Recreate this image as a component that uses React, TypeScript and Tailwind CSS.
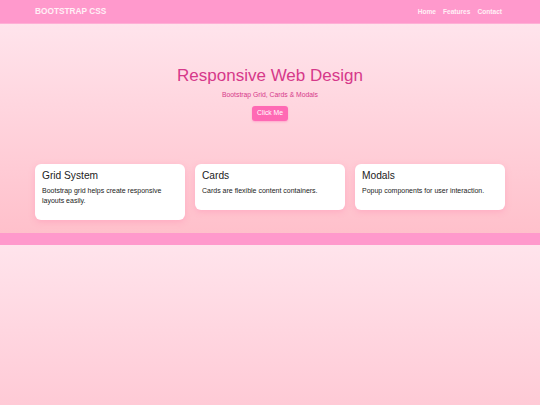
import React from 'react'

const cards = [
    { title: 'Grid System', text: 'Bootstrap grid helps create responsive layouts easily.' },
    { title: 'Cards', text: 'Cards are flexible content containers.' },
    { title: 'Modals', text: 'Popup components for user interaction.' },
]

const App = () => {
    return (
        <div className="min-h-[405px] flex flex-col" style={{ fontFamily: '"Liberation Sans", Arial, sans-serif' }}>
            {/* Navbar */}
            <nav className="h-[24px] bg-[#ff99cc] border-b border-[#ffb0d6]">
                <div className="mx-auto w-[470px] h-full flex items-center justify-between">
                    <span className="text-[8.3px] font-bold text-[#fff0f6]">BOOTSTRAP CSS</span>
                    <div className="flex gap-[7px] text-[6.6px] font-bold text-[#fff0f6] pr-[3px]">
                        <a href="#">Home</a>
                        <a href="#">Features</a>
                        <a href="#">Contact</a>
                    </div>
                </div>
            </nav>

            {/* Hero + cards */}
            <section className="h-[209px] bg-gradient-to-b from-[#ffe4ec] to-[#ffc0cb]">
                <div className="pt-[41px] flex flex-col items-center">
                    <h1 className="text-[17px] leading-[22px] text-[#d6398a]">Responsive Web Design</h1>
                    <p className="mt-[3px] text-[6.8px] leading-[9px] text-[#d6398a]">Bootstrap Grid, Cards &amp; Modals</p>
                    <button className="mt-[7px] h-[15px] w-[36px] rounded-[3px] bg-[#ff69b4] text-white text-[6.8px] shadow-[0_1px_2px_rgba(255,105,180,0.4)]">Click Me</button>
                </div>

                <div className="mx-auto mt-[43px] w-[470px] grid grid-cols-3 gap-[10px] items-start">
                    {cards.map((c) => (
                        <div key={c.title} className="bg-white rounded-[6px] px-[7px] pt-[5px] pb-[14px] shadow-[0_2px_6px_rgba(255,105,160,0.25)]">
                            <h2 className="text-[10.2px] leading-[14px] text-[#222]">{c.title}</h2>
                            <p className="mt-[3px] text-[7px] leading-[10px] text-[#222]">{c.text}</p>
                        </div>
                    ))}
                </div>
            </section>

            {/* Footer band */}
            <footer className="h-[12px] bg-[#ff99cc]"></footer>

            <div className="flex-1 bg-gradient-to-b from-[#ffe4ec] to-[#ffcad6]"></div>
        </div>
    )
}

export default App
